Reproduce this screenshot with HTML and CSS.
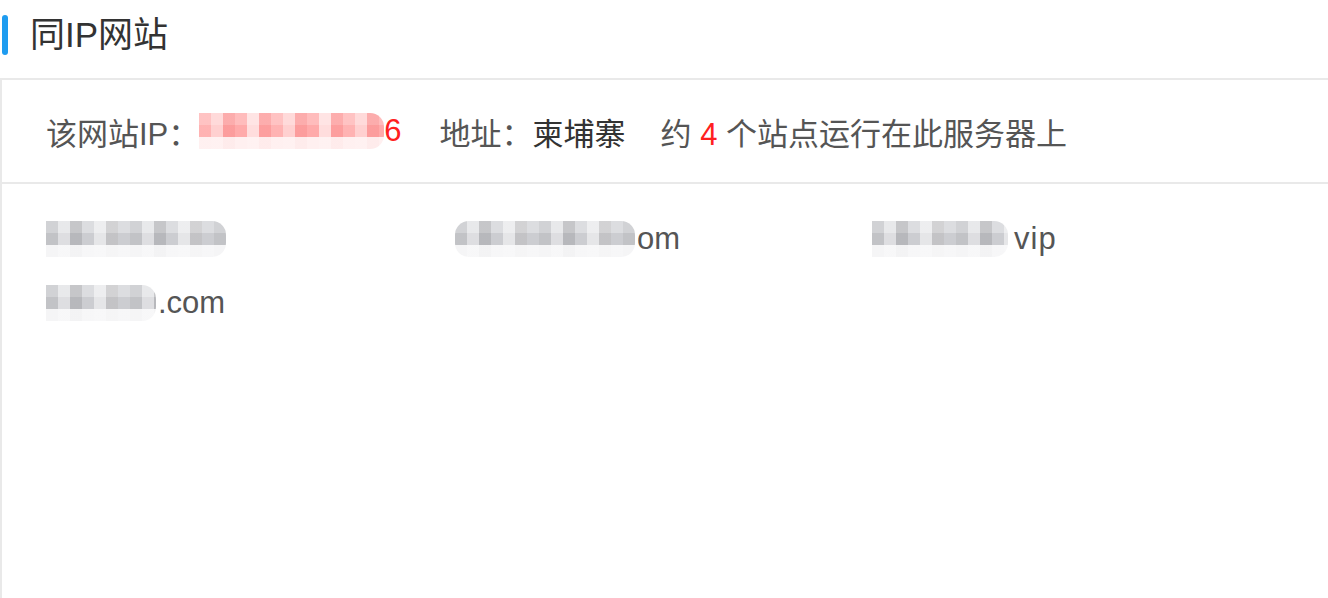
FILE: index.html
```html
<!DOCTYPE html>
<html lang="zh-CN">
<head>
<meta charset="utf-8">
<title>同IP网站</title>
<link rel="stylesheet" href="styles.css">
</head>
<body>
  <div class="title">
    <span class="title-bar"></span>
    <h2 class="title-text">同IP网站</h2>
  </div>
  <div class="card">
    <div class="card-head">
      <span class="label">该网站IP：</span>
      <span class="mosaic mosaic-red"></span><span class="red">6</span>
      <span class="label gap">地址：</span><span class="strong">柬埔寨</span>
      <span class="label gap2">约 <span class="red">4</span> 个站点运行在此服务器上</span>
    </div>
    <div class="card-body">
      <div class="site"><span class="mosaic mosaic-gray w180"></span></div>
      <div class="site"><span class="mosaic mosaic-gray w180 fade"></span><span class="tail">om</span></div>
      <div class="site"><span class="mosaic mosaic-gray w136"></span><span class="tail wide">vip</span></div>
      <div class="site"><span class="mosaic mosaic-gray w110"></span><span class="tail">.com</span></div>
    </div>
  </div>
</body>
</html>
```

FILE: styles.css
```css
* { box-sizing: border-box; }
html, body { margin: 0; padding: 0; background: #fff; }
body {
  font-family: "Liberation Sans", "Noto Sans CJK SC", sans-serif;
  color: #555;
  overflow: hidden;
}
.title {
  display: flex;
  align-items: center;
  height: 70px;
  margin-bottom: 8px;
  padding-left: 2px;
}
.title-bar {
  width: 6px;
  height: 40px;
  border-radius: 3px;
  background: #1e9cf0;
}
.title-text {
  margin: 0 0 0 22px;
  font-size: 35px;
  font-weight: normal;
  color: #333;
  line-height: 40px;
}
.card {
  border-top: 2px solid #e9e9e9;
  border-left: 2px solid #e9e9e9;
  height: 520px;
}
.card-head {
  display: flex;
  align-items: center;
  height: 104px;
  padding-left: 44px;
  border-bottom: 2px solid #e9e9e9;
  font-size: 31px;
  color: #555;
  white-space: pre;
}
.gap { margin-left: 38px; }
.gap2 { margin-left: 35px; }
.red { color: #ff2020; }
.strong { color: #333; }
.card-body {
  display: grid;
  grid-template-columns: repeat(3, 413px);
  padding: 23px 0 0 44px;
}
.site {
  display: flex;
  align-items: center;
  height: 64px;
  font-size: 31px;
  color: #555;
}
.tail { margin-left: 2px; }
.tail.wide { margin-left: 6px; letter-spacing: 1px; }
.mosaic {
  display: inline-block;
  height: 36px;
  border-radius: 0 14px 14px 0;
}
.w180 { width: 180px; }
.w136 { width: 136px; }
.w110 { width: 110px; }
.fade { margin-left: -4px; border-radius: 14px; }
.mosaic-gray {
  background:
    linear-gradient(to bottom, transparent 0 66%, rgba(248,248,249,0.85) 66% 100%),
    repeating-linear-gradient(90deg, rgba(0,0,0,0.05) 0 12px, rgba(255,255,255,0.35) 12px 24px, rgba(0,0,0,0.1) 24px 36px, transparent 36px 48px, rgba(255,255,255,0.5) 48px 60px, rgba(60,40,20,0.06) 60px 72px, transparent 72px 84px),
    linear-gradient(to bottom, #dcdde0 0 33%, #cccdd1 33% 66%, #f0f0f2 66%);
}
.mosaic-red {
  width: 185px;
  margin-left: 0;
  background:
    linear-gradient(to bottom, transparent 0 66%, rgba(255,240,240,0.8) 66% 100%),
    repeating-linear-gradient(90deg, rgba(255,255,255,0.1) 0 12px, rgba(255,255,255,0.45) 12px 24px, rgba(230,60,60,0.12) 24px 36px, transparent 36px 48px, rgba(255,255,255,0.6) 48px 60px, rgba(240,90,90,0.15) 60px 72px),
    linear-gradient(to bottom, #ffbcbc 0 33%, #ffaaaa 33% 66%, #fff0f0 66%);
}
```
